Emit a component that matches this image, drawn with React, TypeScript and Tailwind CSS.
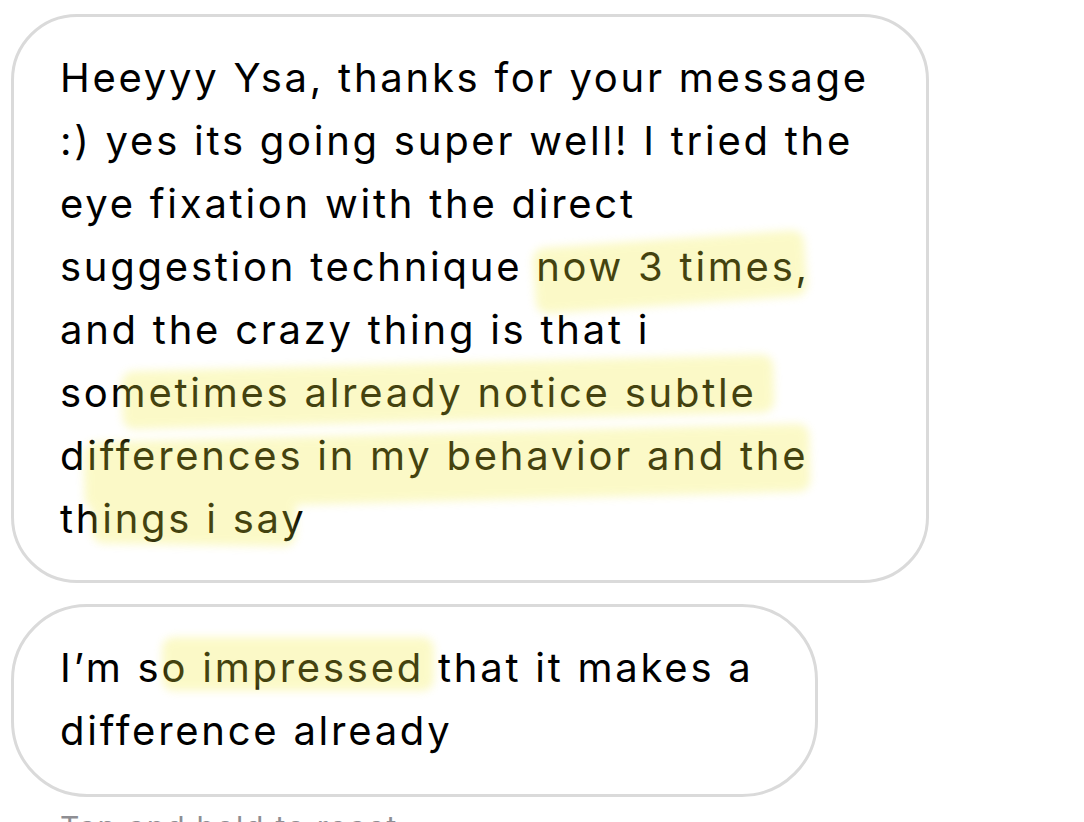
const font = { fontFamily: "Inter, 'Noto Sans', sans-serif" };

type Mark = { left: number; top: number; width: number; height: number; rotate: string };

function Highlights({ marks }: { marks: Mark[] }) {
  return (
    <div className="pointer-events-none absolute inset-0 opacity-[0.28] blur-[4px]">
      {marks.map((m, i) => (
        <div
          key={i}
          className={`absolute rounded-[12px] bg-[#f2ec3a] ${m.rotate}`}
          style={{ left: m.left, top: m.top, width: m.width, height: m.height }}
        />
      ))}
    </div>
  );
}

const firstLines = [
  "Heeyyy Ysa, thanks for your message",
  ":) yes its going super well! I tried the",
  "eye fixation with the direct",
  "suggestion technique now 3 times,",
  "and the crazy thing is that i",
  "sometimes already notice subtle",
  "differences in my behavior and the",
  "things i say",
];

// positions are relative to the bubble's padding box
const firstMarks: Mark[] = [
  { left: 520, top: 222, width: 272, height: 66, rotate: "-rotate-[4deg]" },
  { left: 108, top: 346, width: 652, height: 58, rotate: "-rotate-[1.5deg]" },
  { left: 70, top: 416, width: 726, height: 68, rotate: "-rotate-[1.5deg]" },
  { left: 78, top: 476, width: 204, height: 52, rotate: "rotate-[1deg]" },
];

const secondMarks: Mark[] = [
  { left: 148, top: 30, width: 272, height: 54, rotate: "rotate-0" },
];

export default function App() {
  return (
    <div className="h-[822px] w-[1084px] overflow-hidden bg-white pl-[11px] pt-[14px] text-black" style={font}>
      <div className="relative w-[918px] rounded-[66px] border-[3px] border-[#dadada] pb-[30px] pl-[46px] pt-[29px] text-[40px] leading-[63px] tracking-[2.75px]">
        {firstLines.map((l) => (
          <div key={l} className="whitespace-nowrap">{l}</div>
        ))}
        <Highlights marks={firstMarks} />
      </div>

      <div className="relative mt-[21px] w-[807px] rounded-[76px] border-[3px] border-[#dadada] pb-[32px] pl-[46px] pt-[29px] text-[40px] leading-[63px] tracking-[2.75px]">
        <div className="whitespace-nowrap">I’m so impressed that it makes a</div>
        <div className="whitespace-nowrap">difference already</div>
        <Highlights marks={secondMarks} />
      </div>

      <div className="mt-[12px] pl-[49px] text-[30px] leading-[36px] tracking-[1.8px] text-[#8e8e93]">Tap and hold to react</div>
    </div>
  );
}
